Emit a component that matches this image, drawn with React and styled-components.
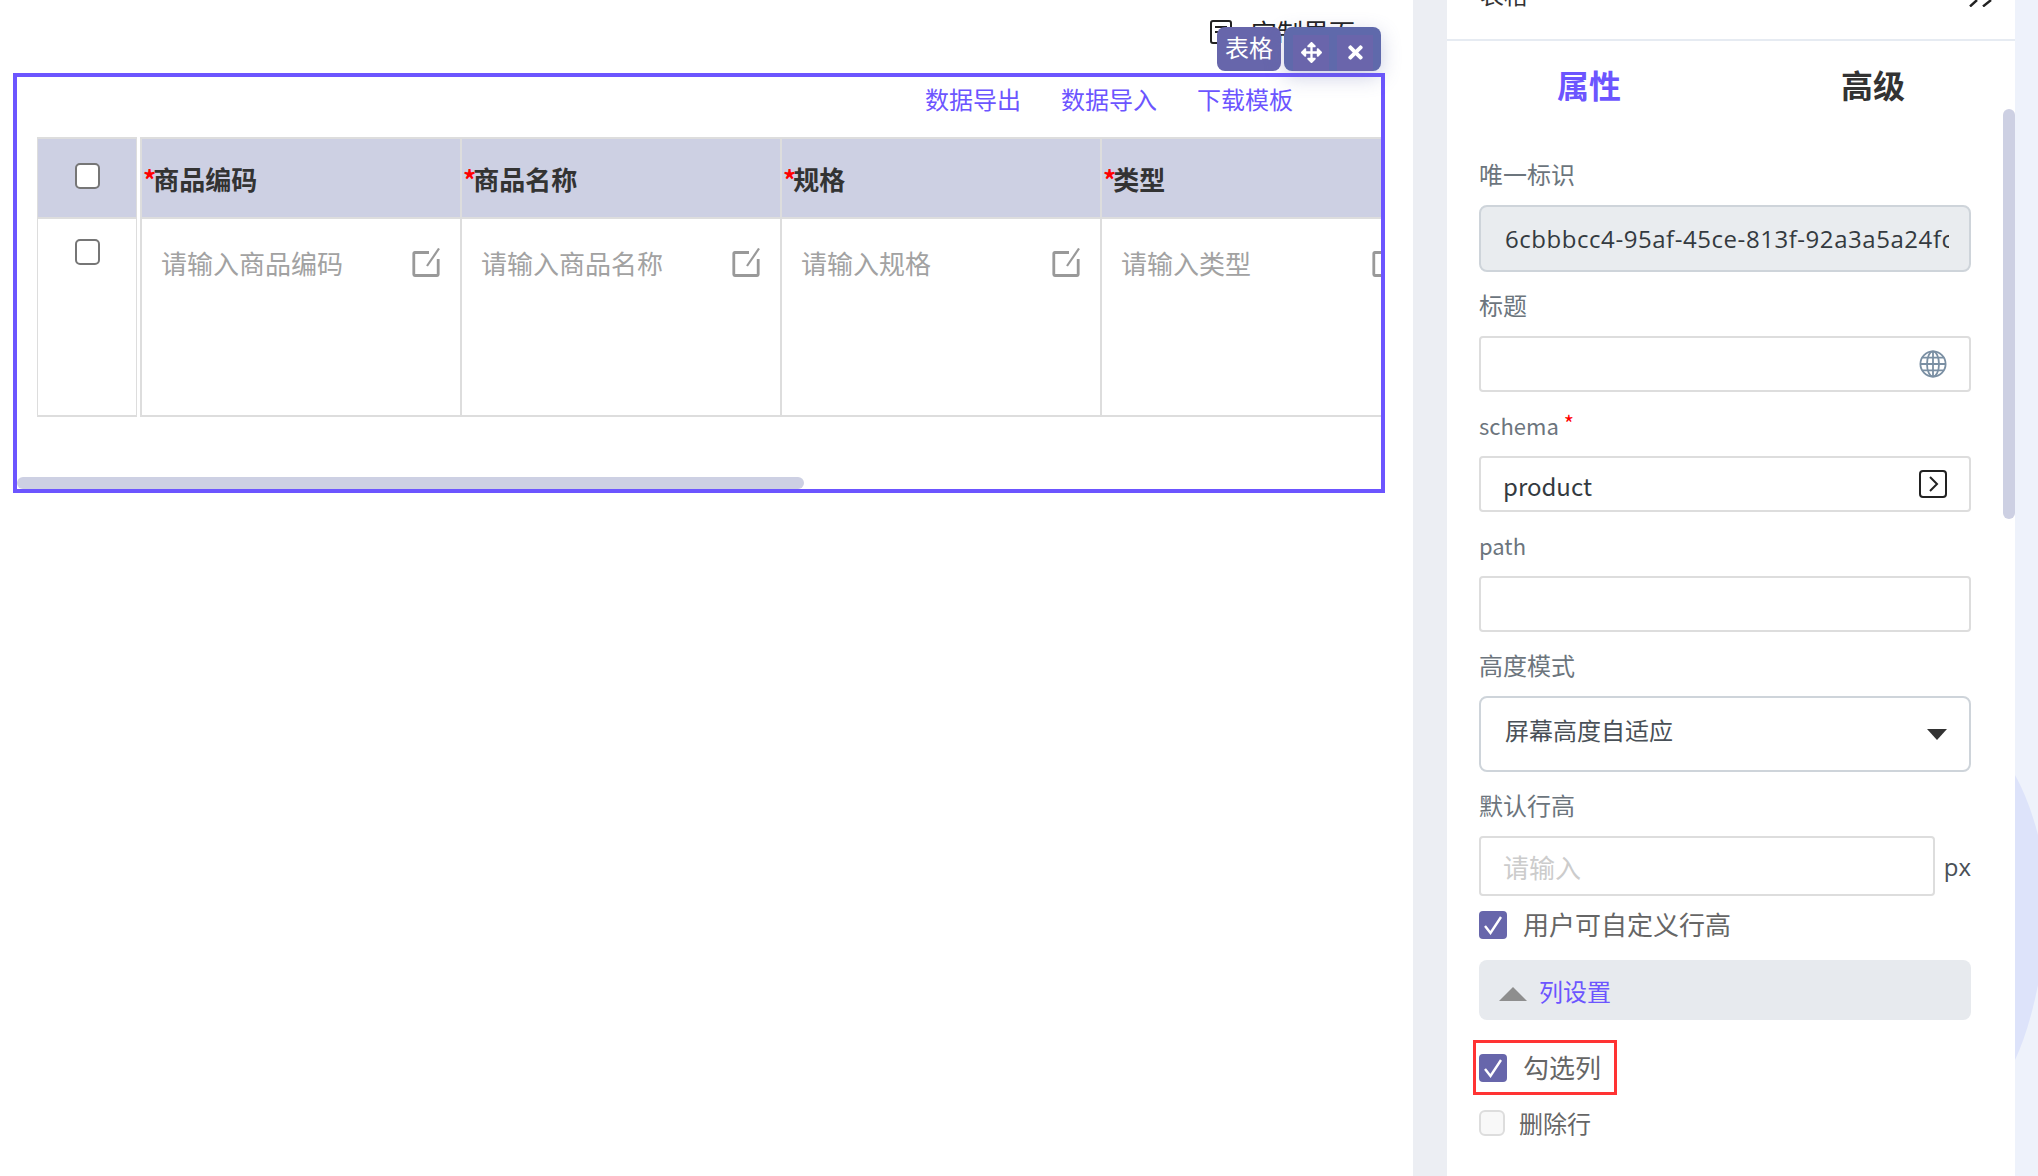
import React from 'react'
import styled, { createGlobalStyle } from 'styled-components'
import { FaArrowsAlt, FaTimes } from 'react-icons/fa'

const purple = '#6c55ff'
const indigo = '#6766ab'
const lilac = '#cdd0e3'
const line = '#dddddd'
const cjk = `"Noto Sans CJK SC", sans-serif`
const latin = `"Open Sans", "Noto Sans CJK SC", sans-serif`

const GlobalStyle = createGlobalStyle`
  html, body {
    margin: 0;
    padding: 0;
    background: #fff;
    font-family: ${cjk};
    overflow: hidden;
  }
`

const Page = styled.div`
  display: flex;
  width: 2038px;
  height: 1176px;
  overflow: hidden;
`

const Canvas = styled.main`
  width: 1413px;
  flex-shrink: 0;
`

const PageHeading = styled.div`
  display: flex;
  align-items: center;
  justify-content: flex-end;
  gap: 19px;
  box-sizing: border-box;
  height: 73px;
  padding: 14px 58px 23px 0;
  font-size: 26px;
  line-height: 36px;
  color: #222;
`

const Frame = styled.section`
  position: relative;
  box-sizing: border-box;
  width: 1372px;
  height: 420px;
  margin-left: 13px;
  border: 4px solid ${purple};
`

const FrameClip = styled.div`
  position: relative;
  height: 100%;
  overflow: hidden;
`

const Badges = styled.div`
  position: absolute;
  top: -50px;
  right: 0;
  display: flex;
  gap: 3px;
  height: 44px;
`

const NameBadge = styled.div`
  width: 64px;
  border-radius: 8px;
  background: ${indigo};
  color: #fff;
  font-size: 24px;
  line-height: 40px;
  text-align: center;
`

const ActionBadge = styled.div`
  display: flex;
  gap: 8px;
  box-sizing: border-box;
  width: 97px;
  padding: 8px 8px 0 9px;
  border-radius: 8px;
  background: #5f69ab;
  box-shadow: 0 6px 20px rgba(95, 105, 171, 0.32);
`

const ActionButton = styled.span`
  display: flex;
  align-items: center;
  justify-content: center;
  box-sizing: border-box;
  width: 36px;
  height: 36px;
  padding-bottom: 2px;
  background: #6a65ab;
  color: #fff;
  font-size: ${p => p.$size}px;
`

const Toolbar = styled.div`
  display: flex;
  justify-content: flex-end;
  gap: 40px;
  box-sizing: border-box;
  height: 60px;
  padding: 4px 88px 0 0;
  font-size: 24px;
  line-height: 36px;
  color: ${purple};
`

const TableWrap = styled.div`
  margin-left: 20px;
`

const Row = styled.div`
  display: flex;
  height: ${p => p.$height}px;
`

const CheckCell = styled.div`
  display: flex;
  justify-content: center;
  box-sizing: border-box;
  width: 100px;
  flex-shrink: 0;
  margin-right: 3px;
  padding-top: ${p => (p.$head ? 24 : 20)}px;
  border: 1px solid ${line};
  border-width: ${p => (p.$head ? '2px 1px 2px 1px' : '0 1px 2px 1px')};
  background: ${p => (p.$head ? lilac : '#fff')};
`

const BoxInput = styled.input.attrs({ type: 'checkbox' })`
  appearance: none;
  box-sizing: border-box;
  width: 25px;
  height: 26px;
  margin: 0;
  border: 2px solid #767676;
  border-radius: 5px;
  background: #fff;
`

const HeadCell = styled.div`
  display: flex;
  align-items: center;
  box-sizing: border-box;
  width: 320px;
  flex-shrink: 0;
  padding-left: 1px;
  border: solid ${line};
  border-width: 2px 0 2px 2px;
  background: ${lilac};
  color: #333;
  font-size: 26px;
  font-weight: 700;
`

const Star = styled.span`
  margin-right: -3px;
  color: #ff0000;
  font-weight: 700;
`

const LabelStar = styled.span`
  position: relative;
  top: -3px;
  color: #ff0000;
  font-size: 22px;
  line-height: 0;
`

const BodyCell = styled.div`
  display: flex;
  align-items: flex-start;
  justify-content: space-between;
  box-sizing: border-box;
  width: 320px;
  flex-shrink: 0;
  padding: 26px 20px 0 19px;
  border: solid ${line};
  border-width: 0 0 2px 2px;
  color: #a2a2a2;
  font-size: 26px;
  line-height: 36px;
`

const EditIcon = styled.svg`
  flex-shrink: 0;
  margin-top: 3px;
`

const ScrollThumb = styled.div`
  position: absolute;
  left: 0;
  bottom: 0;
  width: 787px;
  height: 12px;
  border-radius: 6px;
  background: ${lilac};
`

const Gutter = styled.div`
  width: 34px;
  flex-shrink: 0;
  background: #eceef3;
`

const Panel = styled.aside`
  position: relative;
  width: 568px;
  flex-shrink: 0;
  background: #fff;
`

const PanelScroll = styled.div`
  position: absolute;
  top: 109px;
  right: 0;
  width: 12px;
  height: 410px;
  border-radius: 6px;
  background: ${lilac};
`

const PanelTitle = styled.div`
  display: flex;
  align-items: flex-start;
  justify-content: space-between;
  box-sizing: border-box;
  height: 41px;
  padding: 0 23px 0 33px;
  border-bottom: 2px solid #e6ebf2;
  overflow: hidden;
  font-size: 24px;
  line-height: 36px;
  color: #333;
`

const PanelTitleText = styled.span`
  margin-top: -24px;
`

const Tabs = styled.div`
  display: grid;
  grid-template-columns: 1fr 1fr;
  box-sizing: border-box;
  height: 116px;
  padding-top: 21px;
`

const Tab = styled.div`
  font-size: 32px;
  font-weight: 700;
  line-height: 44px;
  text-align: center;
  color: ${p => (p.$active ? purple : '#333')};
`

const Form = styled.div`
  width: 492px;
  margin-left: 32px;
`

const Field = styled.div`
  margin-bottom: 16px;
`

const Label = styled.div`
  height: 36px;
  margin: -1px 0 13px;
  font-size: ${p => p.$font || 24}px;
  line-height: 36px;
  color: #6c757d;
`

const InputShell = styled.div`
  position: relative;
  display: flex;
  align-items: center;
`

const TextInput = styled.input`
  display: block;
  box-sizing: border-box;
  width: ${p => p.$width || 492}px;
  height: ${p => p.$height || 56}px;
  padding: 2px 20px 0 22px;
  border: 2px solid ${line};
  border-radius: 4px;
  outline: none;
  background: #fff;
  color: #343a40;
  font-family: ${cjk};
  font-size: 24px;

  &::placeholder {
    color: #cccccc;
    font-size: 26px;
    opacity: 1;
  }
`

const IdInput = styled(TextInput)`
  height: 67px;
  padding: 0 20px 0 24px;
  border-color: #ced4da;
  border-radius: 8px;
  background: #e9ecef;
  font-family: ${latin};
  font-size: 24px;
  letter-spacing: 0.55px;
`

const InputIcon = styled.svg`
  position: absolute;
  top: 14px;
  right: 24px;
`

const SelectBox = styled.div`
  display: flex;
  align-items: center;
  justify-content: space-between;
  box-sizing: border-box;
  height: 76px;
  padding: 0 22px 10px 24px;
  border: 2px solid #ced4da;
  border-radius: 8px;
  color: #495057;
  font-size: 24px;
`

const Caret = styled.span`
  width: 0;
  height: 0;
  margin-top: 10px;
  border-left: 10px solid transparent;
  border-right: 10px solid transparent;
  border-top: 11px solid #333;
`

const HeightRow = styled.div`
  display: flex;
  align-items: center;
  justify-content: space-between;
  margin-bottom: 15px;
`

const Unit = styled.span`
  font-family: ${latin};
  font-size: 24px;
  color: #495057;
`

const CheckRow = styled.div`
  display: flex;
  align-items: center;
  gap: 16px;
  height: 28px;
  color: #666;
  font-size: 26px;
`

const CheckText = styled.span`
  margin-top: -3px;
`

const CheckMark = styled.span`
  display: flex;
  align-items: center;
  justify-content: center;
  width: 28px;
  height: 28px;
  border-radius: 4px;
  background: ${indigo};
`

const Collapse = styled.div`
  display: flex;
  align-items: center;
  gap: 12px;
  box-sizing: border-box;
  height: 60px;
  margin: 21px 0 20px;
  padding-left: 20px;
  border-radius: 8px;
  background: #e7eaee;
  color: ${purple};
  font-size: 24px;
`

const CollapseArrow = styled.span`
  width: 0;
  height: 0;
  margin-top: 8px;
  border-left: 14px solid transparent;
  border-right: 14px solid transparent;
  border-bottom: 14px solid #8e8e8e;
`

const Highlight = styled.div`
  display: flex;
  align-items: center;
  box-sizing: border-box;
  width: 144px;
  height: 55px;
  margin: 0 0 14px -6px;
  padding-left: 3px;
  border: 3px solid #ff3333;
`

const PlainRow = styled.div`
  display: flex;
  align-items: center;
  gap: 14px;
  color: #666;
  font-size: 24px;
  line-height: 28px;
`

const EmptyBox = styled.span`
  box-sizing: border-box;
  width: 26px;
  height: 26px;
  border: 2px solid ${line};
  border-radius: 6px;
  background: #f8f8f8;
`

const SideStrip = styled.div`
  flex: 1;
  background: #eef2fb;
`

const Blob = styled.svg`
  display: block;
`

const columns = [
  { title: '商品编码', hint: '请输入商品编码' },
  { title: '商品名称', hint: '请输入商品名称' },
  { title: '规格', hint: '请输入规格' },
  { title: '类型', hint: '请输入类型' },
]

const Edit = () => (
  <EditIcon width="28" height="29" viewBox="0 0 28 29" fill="none" stroke="#999" strokeWidth="2.8">
    <path d="M17 4.5H2.8a1 1 0 0 0-1 1v21a1 1 0 0 0 1 1h22.4a1 1 0 0 0 1-1V11" />
    <path d="M27 0.5L15 18" strokeWidth="2.2" />
  </EditIcon>
)

const Tick = () => (
  <svg width="20" height="20" viewBox="0 0 20 20" fill="none" stroke="#fff" strokeWidth="2.4">
    <path d="M2 11l5.5 7L18 2" />
  </svg>
)

const App = () => (
  <>
    <GlobalStyle />
    <Page>
      <Canvas>
        <PageHeading>
          <svg width="22" height="24" viewBox="0 0 22 24" fill="none" stroke="#222" strokeWidth="2">
            <rect x="1" y="1" width="20" height="22" rx="2" />
            <path d="M5 7h12M5 12h12" />
          </svg>
          <span>定制界面</span>
        </PageHeading>
        <Frame>
          <FrameClip>
            <Toolbar>
              <span>数据导出</span>
              <span>数据导入</span>
              <span>下载模板</span>
            </Toolbar>
            <TableWrap>
              <Row $height={82}>
                <CheckCell $head>
                  <BoxInput readOnly />
                </CheckCell>
                {columns.map(col => (
                  <HeadCell key={col.title}>
                    <Star>*</Star>
                    {col.title}
                  </HeadCell>
                ))}
              </Row>
              <Row $height={198}>
                <CheckCell>
                  <BoxInput readOnly />
                </CheckCell>
                {columns.map(col => (
                  <BodyCell key={col.title}>
                    {col.hint}
                    <Edit />
                  </BodyCell>
                ))}
              </Row>
            </TableWrap>
            <ScrollThumb />
          </FrameClip>
          <Badges>
            <NameBadge>表格</NameBadge>
            <ActionBadge>
              <ActionButton $size={21}><FaArrowsAlt /></ActionButton>
              <ActionButton $size={21}><FaTimes /></ActionButton>
            </ActionBadge>
          </Badges>
        </Frame>
      </Canvas>
      <Gutter />
      <Panel>
        <PanelScroll />
        <PanelTitle>
          <PanelTitleText>表格</PanelTitleText>
          <svg width="23" height="7" viewBox="0 0 23 7" fill="none" stroke="#222" strokeWidth="2.4">
            <path d="M1 6.5L8 0M14 6.5L22 0" />
          </svg>
        </PanelTitle>
        <Tabs>
          <Tab $active>属性</Tab>
          <Tab>高级</Tab>
        </Tabs>
        <Form>
          <Field>
            <Label>唯一标识</Label>
            <IdInput disabled readOnly value="6cbbbcc4-95af-45ce-813f-92a3a5a24fc1" />
          </Field>
          <Field>
            <Label>标题</Label>
            <InputShell>
              <TextInput readOnly value="" />
              <InputIcon width="28" height="28" viewBox="0 0 28 28" fill="none" stroke="#7a8fa3" strokeWidth="1.8">
                <circle cx="14" cy="14" r="12.6" />
                <ellipse cx="14" cy="14" rx="6" ry="12.6" />
                <path d="M14 1.4v25.2M1.4 14h25.2M3.4 7.6h21.2M3.4 20.4h21.2" />
              </InputIcon>
            </InputShell>
          </Field>
          <Field>
            <Label $font={22}>schema <LabelStar>*</LabelStar></Label>
            <InputShell>
              <TextInput readOnly value="product" />
              <InputIcon width="28" height="28" viewBox="0 0 28 28" fill="none" stroke="#222" strokeWidth="2">
                <rect x="1" y="1" width="26" height="26" rx="3" />
                <path d="M11 7l7 7-7 7" />
              </InputIcon>
            </InputShell>
          </Field>
          <Field>
            <Label $font={22}>path</Label>
            <TextInput readOnly value="" />
          </Field>
          <Field>
            <Label>高度模式</Label>
            <SelectBox>
              屏幕高度自适应
              <Caret />
            </SelectBox>
          </Field>
          <Label>默认行高</Label>
          <HeightRow>
            <TextInput $width={456} $height={60} placeholder="请输入" readOnly />
            <Unit>px</Unit>
          </HeightRow>
          <CheckRow>
            <CheckMark><Tick /></CheckMark>
            <CheckText>用户可自定义行高</CheckText>
          </CheckRow>
          <Collapse>
            <CollapseArrow />
            列设置
          </Collapse>
          <Highlight>
            <CheckRow>
              <CheckMark><Tick /></CheckMark>
              <CheckText>勾选列</CheckText>
            </CheckRow>
          </Highlight>
          <PlainRow>
            <EmptyBox />
            删除行
          </PlainRow>
        </Form>
      </Panel>
      <SideStrip>
        <Blob width="23" height="1176" viewBox="0 0 23 1176">
          <path d="M0 775Q14 800 23 835V985Q14 1030 0 1060Z" fill="#dde3fa" />
        </Blob>
      </SideStrip>
    </Page>
  </>
)

export default App
